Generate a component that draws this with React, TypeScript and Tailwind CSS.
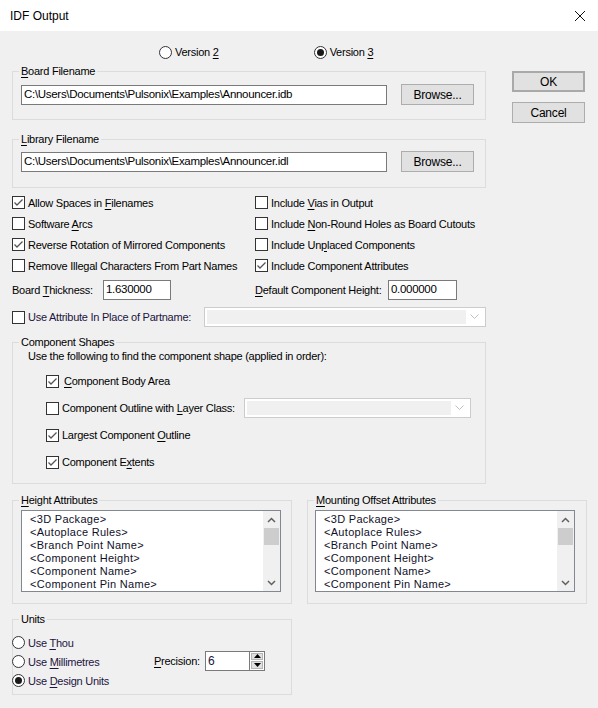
import React from "react";

const F = { fontFamily: '"Liberation Sans", Arial, sans-serif' } as const;

function U({ children }: { children: React.ReactNode }) {
  return <span className="underline underline-offset-[2px] decoration-[1px]">{children}</span>;
}

function Check({ checked }: { checked?: boolean }) {
  return (
    <span className="w-[13px] h-[13px] border border-[#333333] bg-white flex items-center justify-center shrink-0">
      {checked && (
        <svg width="11" height="11" viewBox="0 0 11 11">
          <path d="M1.5 5.5 L4 8 L9.5 2.5" fill="none" stroke="#555555" strokeWidth="1.3" />
        </svg>
      )}
    </span>
  );
}

function Radio({ checked }: { checked?: boolean }) {
  return (
    <span className="w-[13px] h-[13px] rounded-full border border-[#333333] bg-white flex items-center justify-center shrink-0">
      {checked && <span className="w-[7px] h-[7px] rounded-full bg-[#1a1a1a]" />}
    </span>
  );
}

function CheckRow({ checked, children }: { checked?: boolean; children: React.ReactNode }) {
  return (
    <div className="flex items-center h-[21px] gap-[3px]">
      <Check checked={checked} />
      <span className="leading-[14px] whitespace-nowrap">{children}</span>
    </div>
  );
}

function TextBox({ value, w }: { value: string; w: string }) {
  return (
    <div className={`${w} h-[20px] border border-[#7a7a7a] bg-white flex items-center pl-[2px] text-[11.5px] tracking-[-0.3px] whitespace-nowrap overflow-hidden`}>
      {value}
    </div>
  );
}

function Btn({ children, def }: { children: React.ReactNode; def?: boolean }) {
  return (
    <div
      className={`w-[73px] h-[21px] bg-[#e1e1e1] flex items-center justify-center text-[12px] tracking-[-0.2px] ${
        def ? "border-2 border-[#a9a9a9]" : "border border-[#adadad]"
      }`}
    >
      {children}
    </div>
  );
}

function Combo({ w }: { w: string }) {
  return (
    <div className={`${w} h-[20px] border border-[#cccccc] bg-white flex items-center p-[2px]`}>
      <div className="flex-1 h-full bg-[#f0f0f0]" />
      <div className="w-[17px] flex items-center justify-center">
        <svg width="9" height="6" viewBox="0 0 9 6">
          <path d="M0.5 0.5 L4.5 4.5 L8.5 0.5" fill="none" stroke="#bfbfbf" strokeWidth="1" />
        </svg>
      </div>
    </div>
  );
}

function Group({
  title,
  className,
  children,
}: {
  title: React.ReactNode;
  className?: string;
  children: React.ReactNode;
}) {
  return (
    <fieldset className={`border border-[#dcdcdc] ${className ?? ""}`}>
      <legend className="ml-[6px] px-[2px] leading-[14px] text-[11px]">{title}</legend>
      {children}
    </fieldset>
  );
}

const items = [
  "<3D Package>",
  "<Autoplace Rules>",
  "<Branch Point Name>",
  "<Component Height>",
  "<Component Name>",
  "<Component Pin Name>",
];

function ListBox() {
  return (
    <div className="w-[260px] h-[82px] border border-[#828790] bg-white flex">
      <div className="flex-1 pt-[2px] pl-[8px]">
        {items.map((t) => (
          <div key={t} className="h-[13px] leading-[13px] text-[11px] tracking-[0.3px] text-[#10102a] whitespace-nowrap">
            {t}
          </div>
        ))}
      </div>
      <div className="w-[17px] bg-[#f0f0f0] flex flex-col items-center">
        <div className="h-[17px] flex items-center justify-center">
          <svg width="9" height="6" viewBox="0 0 9 6">
            <path d="M1 5 L4.5 1.5 L8 5" fill="none" stroke="#606060" strokeWidth="1.5" />
          </svg>
        </div>
        <div className="w-[15px] h-[17px] bg-[#cdcdcd]" />
        <div className="flex-1" />
        <div className="h-[17px] flex items-center justify-center">
          <svg width="9" height="6" viewBox="0 0 9 6">
            <path d="M1 1 L4.5 4.5 L8 1" fill="none" stroke="#606060" strokeWidth="1.5" />
          </svg>
        </div>
      </div>
    </div>
  );
}

function RadioRow({ checked, children }: { checked?: boolean; children: React.ReactNode }) {
  return (
    <div className="flex items-center gap-[3px] h-[19px]">
      <Radio checked={checked} />
      <span className="leading-[14px] whitespace-nowrap">{children}</span>
    </div>
  );
}

export default function App() {
  return (
    <div
      className="w-[598px] h-[708px] flex flex-col bg-[#f0f0f0] text-[11px] text-black tracking-[-0.25px] overflow-hidden"
      style={F}
    >
      {/* Title bar */}
      <div className="h-[31px] bg-white flex items-center justify-between pl-[10px] pr-[12px] shrink-0">
        <span className="text-[12px] tracking-normal">IDF Output</span>
        <svg width="12" height="12" viewBox="0 0 12 12">
          <path d="M1 1 L11 11 M11 1 L1 11" stroke="#111111" strokeWidth="1" />
        </svg>
      </div>

      <div className="flex flex-col pl-[12px]">
        {/* Version row */}
        <div className="flex items-center h-[16px] mt-[13px]">
          <div className="ml-[147px] flex items-center gap-[3px]">
            <Radio />
            <span>
              Version <U>2</U>
            </span>
          </div>
          <div className="ml-[95px] flex items-center gap-[3px]">
            <Radio checked />
            <span>
              Version <U>3</U>
            </span>
          </div>
        </div>

        {/* Upper section with buttons */}
        <div className="flex mt-[4px]">
          <div className="w-[474px] flex flex-col">
            <Group
              title={
                <>
                  <U>B</U>oard Filename
                </>
              }
              className="h-[56px]"
            >
              <div className="flex items-center justify-between mt-[6px] pl-[8px] pr-[11px]">
                <TextBox value="C:\Users\Documents\Pulsonix\Examples\Announcer.idb" w="w-[366px]" />
                <Btn>Browse...</Btn>
              </div>
            </Group>

            <Group
              title={
                <>
                  <U>L</U>ibrary Filename
                </>
              }
              className="h-[56px] mt-[12px]"
            >
              <div className="flex items-center justify-between mt-[5px] pl-[8px] pr-[11px]">
                <TextBox value="C:\Users\Documents\Pulsonix\Examples\Announcer.idl" w="w-[366px]" />
                <Btn>Browse...</Btn>
              </div>
            </Group>

            {/* checkboxes */}
            <div className="grid grid-cols-[243px_1fr] mt-[4px]">
              <CheckRow checked>
                Allow Spaces in <U>F</U>ilenames
              </CheckRow>
              <CheckRow>
                Include <U>V</U>ias in Output
              </CheckRow>
              <CheckRow>
                Software <U>A</U>rcs
              </CheckRow>
              <CheckRow>
                Include <U>N</U>on-Round Holes as Board Cutouts
              </CheckRow>
              <CheckRow checked>Reverse Rotation of Mirrored Components</CheckRow>
              <CheckRow>
                Include Un<U>p</U>laced Components
              </CheckRow>
              <CheckRow>Remove Illegal Characters From Part Names</CheckRow>
              <CheckRow checked>Include Component Attributes</CheckRow>
            </div>

            {/* thickness row */}
            <div className="grid grid-cols-[243px_1fr] mt-[4px] h-[20px]">
              <div className="flex items-center">
                <span className="w-[91px]">
                  Board <U>T</U>hickness:
                </span>
                <TextBox value="1.630000" w="w-[68px]" />
              </div>
              <div className="flex items-center">
                <span className="w-[133px]">
                  <U>D</U>efault Component Height:
                </span>
                <TextBox value="0.000000" w="w-[69px]" />
              </div>
            </div>

            {/* use attribute row */}
            <div className="flex items-center mt-[7px] h-[20px]">
              <div className="flex items-center gap-[3px] w-[192px]">
                <Check />
                <span className="text-[#1c1440]">Use Attribute In Place of Partname:</span>
              </div>
              <Combo w="w-[282px]" />
            </div>

            {/* Component Shapes */}
            <Group title="Component Shapes" className="h-[149px] mt-[8px]">
              <div className="pl-[15px]">
                <div className="leading-[14px]">Use the following to find the component shape (applied in order):</div>
                <div className="flex flex-col gap-[7px] mt-[8px] pl-[18px]">
                  <div className="flex items-center gap-[5px] h-[20px]">
                    <Check checked />
                    <span>
                      <U>C</U>omponent Body Area
                    </span>
                  </div>
                  <div className="flex items-center h-[20px]">
                    <div className="flex items-center gap-[3px] w-[198px]">
                      <Check />
                      <span>
                        Component Outline with <U>L</U>ayer Class:
                      </span>
                    </div>
                    <Combo w="w-[227px]" />
                  </div>
                  <div className="flex items-center gap-[3px] h-[20px]">
                    <Check checked />
                    <span>
                      Largest Component <U>O</U>utline
                    </span>
                  </div>
                  <div className="flex items-center gap-[3px] h-[20px]">
                    <Check checked />
                    <span>
                      Component E<U>x</U>tents
                    </span>
                  </div>
                </div>
              </div>
            </Group>
          </div>

          {/* buttons */}
          <div className="ml-[26px] mt-[7px] flex flex-col gap-[10px]">
            <Btn def>OK</Btn>
            <Btn>Cancel</Btn>
          </div>
        </div>

        {/* Attribute lists */}
        <div className="flex gap-[15px] mt-[9px]">
          <Group
            title={
              <>
                <U>H</U>eight Attributes
              </>
            }
            className="w-[280px] h-[111px]"
          >
            <div className="mt-[3px] pl-[8px]">
              <ListBox />
            </div>
          </Group>
          <Group
            title={
              <>
                <U>M</U>ounting Offset Attributes
              </>
            }
            className="w-[280px] h-[111px]"
          >
            <div className="mt-[3px] pl-[7px]">
              <ListBox />
            </div>
          </Group>
        </div>

        {/* Units */}
        <Group title="Units" className="w-[280px] h-[83px] mt-[8px]">
          <div className="flex flex-col mt-[7px] -ml-[1px] text-[#1c1440]">
            <RadioRow>
              Use <U>T</U>hou
            </RadioRow>
            <div className="flex items-center">
              <div className="w-[142px]">
                <RadioRow>
                  Use <U>M</U>illimetres
                </RadioRow>
              </div>
              <span className="w-[51px] text-black">
                <U>P</U>recision:
              </span>
              <div className="flex items-center h-[20px] -mt-[2px]">
                <div className="w-[44px] h-[20px] border border-[#7a7a7a] border-r-0 bg-white flex items-center pl-[2px] text-[12px]">
                  6
                </div>
                <div className="w-[16px] h-[20px] border border-[#7a7a7a] bg-white p-[1px] flex flex-col gap-[1px]">
                  <div className="flex-1 bg-[#e1e1e1] border border-[#b5b5b5] flex items-center justify-center">
                    <svg width="7" height="4" viewBox="0 0 7 4">
                      <path d="M0 4 L3.5 0 L7 4 Z" fill="#000" />
                    </svg>
                  </div>
                  <div className="flex-1 bg-[#e1e1e1] border border-[#b5b5b5] flex items-center justify-center">
                    <svg width="7" height="4" viewBox="0 0 7 4">
                      <path d="M0 0 L3.5 4 L7 0 Z" fill="#000" />
                    </svg>
                  </div>
                </div>
              </div>
            </div>
            <RadioRow checked>
              Use <U>D</U>esign Units
            </RadioRow>
          </div>
        </Group>
      </div>
    </div>
  );
}
